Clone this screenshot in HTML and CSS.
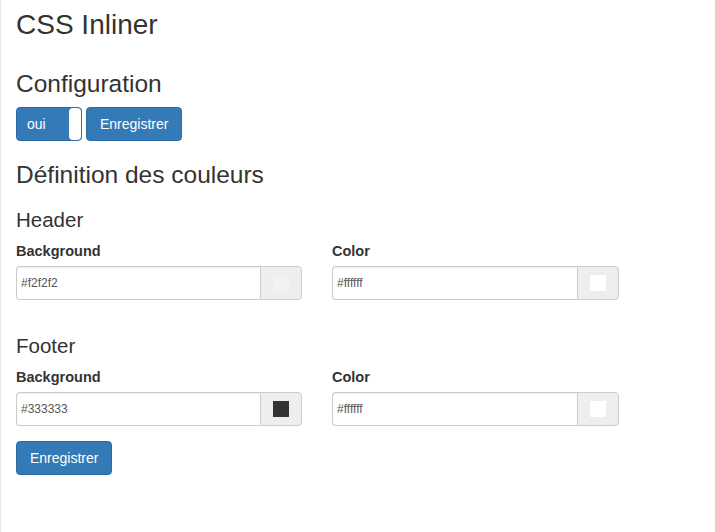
FILE: index.html
```html
<!DOCTYPE html>
<html lang="fr">
<head>
<meta charset="utf-8">
<title>CSS Inliner</title>
<link rel="stylesheet" href="styles.css">
</head>
<body>
<div class="page">
  <h1 class="title">CSS Inliner</h1>
  <h3 class="section-title config-title">Configuration</h3>
  <div class="config-actions">
    <div class="toggle"><span class="toggle-label">oui</span><span class="toggle-handle"></span></div>
    <button class="btn">Enregistrer</button>
  </div>
  <h3 class="section-title colors-title">Définition des couleurs</h3>
  <form class="colors-form">
    <h4 class="group-title header-title">Header</h4>
    <div class="fields">
      <div class="field">
        <label class="field-label">Background</label>
        <div class="input-group">
          <input class="text-input" type="text" value="#f2f2f2">
          <span class="addon"><i class="swatch" style="background:#f2f2f2"></i></span>
        </div>
      </div>
      <div class="field">
        <label class="field-label">Color</label>
        <div class="input-group">
          <input class="text-input" type="text" value="#ffffff">
          <span class="addon"><i class="swatch" style="background:#ffffff"></i></span>
        </div>
      </div>
    </div>
    <h4 class="group-title footer-title">Footer</h4>
    <div class="fields">
      <div class="field">
        <label class="field-label">Background</label>
        <div class="input-group">
          <input class="text-input" type="text" value="#333333">
          <span class="addon"><i class="swatch" style="background:#333333"></i></span>
        </div>
      </div>
      <div class="field">
        <label class="field-label">Color</label>
        <div class="input-group">
          <input class="text-input" type="text" value="#ffffff">
          <span class="addon"><i class="swatch" style="background:#ffffff"></i></span>
        </div>
      </div>
    </div>
    <button class="btn submit-btn" type="button">Enregistrer</button>
  </form>
</div>
</body>
</html>
```

FILE: styles.css
```css
html, body {
  margin: 0;
  padding: 0;
  background: #fff;
}
body {
  font-family: "Liberation Sans", Arial, sans-serif;
  font-size: 14px;
  line-height: 20px;
  color: #333;
}
.page {
  border-left: 1px solid #e6e6e6;
  min-height: 532px;
  box-sizing: border-box;
  padding: 9px 15px 0 15px;
}
.title {
  font-size: 28px;
  line-height: 32px;
  font-weight: 500;
  margin: 0;
}
.section-title {
  font-size: 24.5px;
  line-height: 28px;
  font-weight: 500;
  margin: 0;
}
.config-title { margin-top: 29px; }
.colors-title { margin-top: 20px; }
.config-actions {
  display: flex;
  gap: 4px;
  margin-top: 9px;
}
.btn {
  font-family: inherit;
  font-size: 14px;
  line-height: 20px;
  height: 34px;
  padding: 6px 13px;
  color: #fff;
  background: #337ab7;
  border: 1px solid #2e6da4;
  border-radius: 4px;
  box-sizing: border-box;
  cursor: pointer;
}
.toggle {
  width: 66px;
  height: 34px;
  box-sizing: border-box;
  background: #337ab7;
  border: 1px solid #2e6da4;
  border-radius: 4px;
  display: flex;
  justify-content: space-between;
  align-items: stretch;
  color: #fff;
}
.toggle-label {
  padding: 6px 0 0 10px;
}
.toggle-handle {
  width: 12px;
  background: #fff;
  border-radius: 4px;
}
.colors-form { margin: 0; }
.group-title {
  font-size: 20.5px;
  line-height: 24px;
  font-weight: 500;
  margin: 0 0 9px 0;
}
.header-title { margin-top: 19px; }
.footer-title { margin-top: 34px; }
.fields {
  display: grid;
  grid-template-columns: 286px 287px;
  column-gap: 30px;
}
.field-label {
  display: block;
  font-size: 14.5px;
  font-weight: bold;
  margin-bottom: 5px;
}
.input-group {
  display: flex;
  height: 34px;
}
.text-input {
  flex: 1;
  min-width: 0;
  box-sizing: border-box;
  height: 34px;
  border: 1px solid #ccc;
  border-right: none;
  border-radius: 4px 0 0 4px;
  padding: 0 4px;
  font-family: "Liberation Sans", Arial, sans-serif;
  font-size: 12px;
  color: #555;
  box-shadow: inset 0 1px 1px rgba(0,0,0,0.075);
  outline: none;
}
.addon {
  width: 42px;
  box-sizing: border-box;
  background: #eee;
  border: 1px solid #ccc;
  border-radius: 0 4px 4px 0;
  display: flex;
  align-items: center;
  justify-content: center;
}
.swatch {
  display: block;
  width: 16px;
  height: 16px;
}
.submit-btn {
  margin-top: 15px;
}
```
